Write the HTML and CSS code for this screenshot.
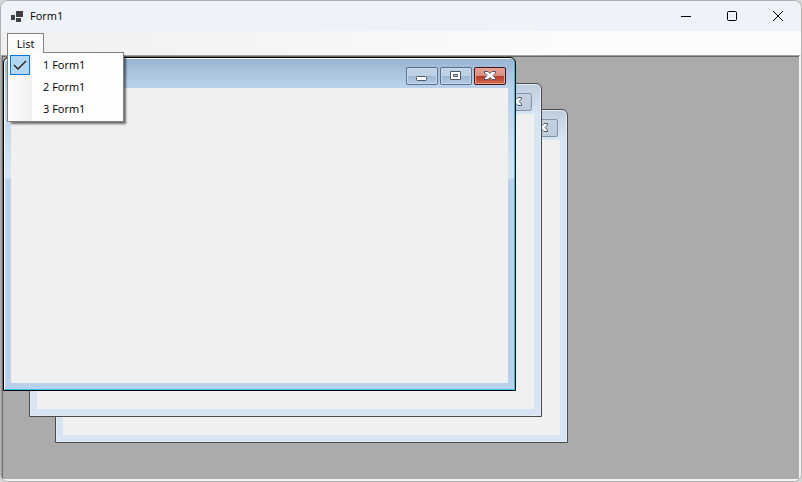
FILE: index.html
```html
<!DOCTYPE html>
<html lang="en">
<head>
<meta charset="utf-8">
<title>Form1</title>
<link rel="stylesheet" href="styles.css">
</head>
<body>
<div class="app">
  <header class="titlebar">
    <svg class="app-icon" width="12" height="11" viewBox="0 0 12 11" shape-rendering="crispEdges" aria-hidden="true">
      <path fill="#3f3f41" d="M5 0h7v6H5zM0 4h4v5H0zM5 7h5v4H5z"/>
    </svg>
    <h1 class="title">Form1</h1>
    <div class="caption">
      <button class="caption-button" aria-label="Minimize"><svg width="12" height="12" viewBox="0 0 12 12"><path d="M1 6.5h10"/></svg></button>
      <button class="caption-button" aria-label="Maximize"><svg width="12" height="12" viewBox="0 0 12 12"><rect x="1.5" y="1.5" width="9" height="9" rx="1"/></svg></button>
      <button class="caption-button" aria-label="Close"><svg width="12" height="12" viewBox="0 0 12 12"><path d="M1 1l10 10M11 1L1 11"/></svg></button>
    </div>
  </header>
  <nav class="menubar">
    <div class="menu">
      <button class="menu-title">List</button>
      <div class="dropdown">
        <button class="menu-item">
          <span class="check"><svg width="18" height="18" viewBox="0 0 18 18" aria-hidden="true"><path d="M3 9l4 4 8-8"/></svg></span>1 Form1
        </button>
        <button class="menu-item"><span class="no-check"></span>2 Form1</button>
        <button class="menu-item"><span class="no-check"></span>3 Form1</button>
      </div>
    </div>
  </nav>
  <main class="desktop">
    <section class="child third">
      <div class="child-bar">
        <button class="child-button" aria-label="Close"><svg width="12" height="10" viewBox="0 0 12 10"><path class="glyph" d="M.5.5h3.500L6 2.500 8 .5h3.500v1.500L9 4.500l2.500 2.500v1.500H8l-2-2-2 2H.5V7L3 4.500.5 2z"/></svg></button>
      </div>
      <div class="child-body"></div>
    </section>
    <section class="child second">
      <div class="child-bar">
        <button class="child-button" aria-label="Close"><svg width="12" height="10" viewBox="0 0 12 10"><path class="glyph" d="M.5.5h3.500L6 2.500 8 .5h3.500v1.500L9 4.500l2.500 2.500v1.500H8l-2-2-2 2H.5V7L3 4.500.5 2z"/></svg></button>
      </div>
      <div class="child-body"></div>
    </section>
    <section class="child active">
      <div class="child-bar">
        <button class="child-button" aria-label="Minimize"><svg width="12" height="10" viewBox="0 0 12 10"><rect class="glyph" x=".5" y="5.5" width="10" height="4" rx="1"/></svg></button>
        <button class="child-button" aria-label="Maximize"><svg width="12" height="10" viewBox="0 0 12 10"><path class="glyph" fill-rule="evenodd" d="M.5.5h10v8H.5zM3.500 3.500v2h4v-2z"/></svg></button>
        <button class="child-button close" aria-label="Close"><svg width="12" height="10" viewBox="0 0 12 10"><path class="glyph" d="M.5.5h3.500L6 2.500 8 .5h3.500v1.500L9 4.500l2.500 2.500v1.500H8l-2-2-2 2H.5V7L3 4.500.5 2z"/></svg></button>
      </div>
      <div class="child-body"></div>
    </section>
  </main>
</div>
</body>
</html>
```
FILE: styles.css
```css
* { box-sizing: border-box; }

body {
  margin: 0;
  background: #d6d6d6;
  font: 11px/20px "Open Sans", "Noto Sans", sans-serif;
  color: #000;
}

button {
  margin: 0;
  padding: 0;
  border: 0;
  background: none;
  font: inherit;
  color: inherit;
}

svg { display: block; }

.app {
  display: flex;
  flex-direction: column;
  height: 100vh;
  overflow: hidden;
  border: 1px solid #b0b0b0;
  border-radius: 8px;
  background: #f0f0f0;
}

.titlebar {
  display: flex;
  align-items: center;
  height: 30px;
  padding-left: 10px;
  background: linear-gradient(90deg, #f0f3fa, #edf3f8);
}

.title {
  margin: 0 0 0 7px;
  font-size: 11px;
  font-weight: 400;
}

.caption {
  display: flex;
  margin-left: auto;
}

.caption-button {
  display: flex;
  align-items: center;
  justify-content: center;
  width: 46px;
  height: 28px;
}

.caption-button path,
.caption-button rect {
  fill: none;
  stroke: #000;
}

.menubar {
  height: 24px;
  padding: 2px 6px;
  background: linear-gradient(90deg, #f0f0f0, #fcfcfc 75%);
}

.menu {
  position: relative;
  width: max-content;
}

.menu-title {
  display: block;
  position: relative;
  z-index: 3;
  width: 37px;
  height: 20px;
  border: 1px solid #808080;
  border-bottom: 0;
  background: linear-gradient(#fff, #fafafa);
  line-height: 18px;
}

.dropdown {
  position: absolute;
  z-index: 2;
  top: 19px;
  left: 0;
  width: 117px;
  padding: 1px 2px;
  border: 1px solid #808080;
  background: linear-gradient(90deg, #fcfcfc, #f0f0f0 24px, #fdfdfd 24px);
  box-shadow: 3px 3px 2px -1px rgba(0, 0, 0, .55);
}

.menu-item {
  display: flex;
  align-items: center;
  gap: 13px;
  width: 100%;
  height: 22px;
}

.check,
.no-check { width: 20px; height: 20px; }

.check {
  border: 1px solid #0078d7;
  background: #b3d7f3;
}

.check path { fill: none; stroke: #212121; stroke-width: 1.4; }

.desktop {
  position: relative;
  flex: 1;
  overflow: hidden;
  border: 1px solid #a0a0a0;
  border-right: 2px solid #f4f4f4;
  border-bottom: 2px solid #f4f4f4;
  background: #ababab;
  box-shadow: inset 1px 1px #696969;
}

.child {
  display: flex;
  flex-direction: column;
  position: absolute;
  width: 513px;
  height: 334px;
  padding: 0 7px 7px;
  border: 1px solid #4a4a4f;
  border-radius: 6px 6px 0 0;
  background: linear-gradient(#bfcddb, #d7e4f2 28px);
  box-shadow: inset 0 0 0 1px #e3ebf4;
}

.active {
  top: 1px;
  left: 1px;
  border-color: #000;
  background:
    linear-gradient(transparent 28px, rgba(255, 255, 255, .45) 120px, transparent 121px),
    linear-gradient(#99b4d1, #b9d1ea 28px);
  box-shadow: inset 1px 1px #fff, inset -1px -1px #25c8e8;
}

.second { top: 27px; left: 27px; }
.third { top: 53px; left: 53px; }

.child-bar {
  display: flex;
  justify-content: flex-end;
  gap: 2px;
  height: 30px;
  padding: 9px 2px 0;
}

.child-button {
  display: flex;
  align-items: center;
  justify-content: center;
  width: 32px;
  height: 18px;
  border: 1px solid #8493ac;
  border-radius: 2px;
  background: linear-gradient(#c4d1df, #bccbdb);
}

.active .child-button {
  border-color: #5c708d;
  background: linear-gradient(#bed1e6 50%, #9db6d1 50%, #b5cce5);
  box-shadow: inset 0 0 0 1px #c8daed;
}

.active .close {
  border-color: #43141a;
  background: linear-gradient(#e4a597, #d98b7c 50%, #b53825 50%, #d06b52);
  box-shadow: inset 0 0 0 1px #e5a596;
}

.glyph { fill: #fff; stroke: #535666; }

.child-body {
  flex: 1;
  background: #f0f0f0;
}
```
